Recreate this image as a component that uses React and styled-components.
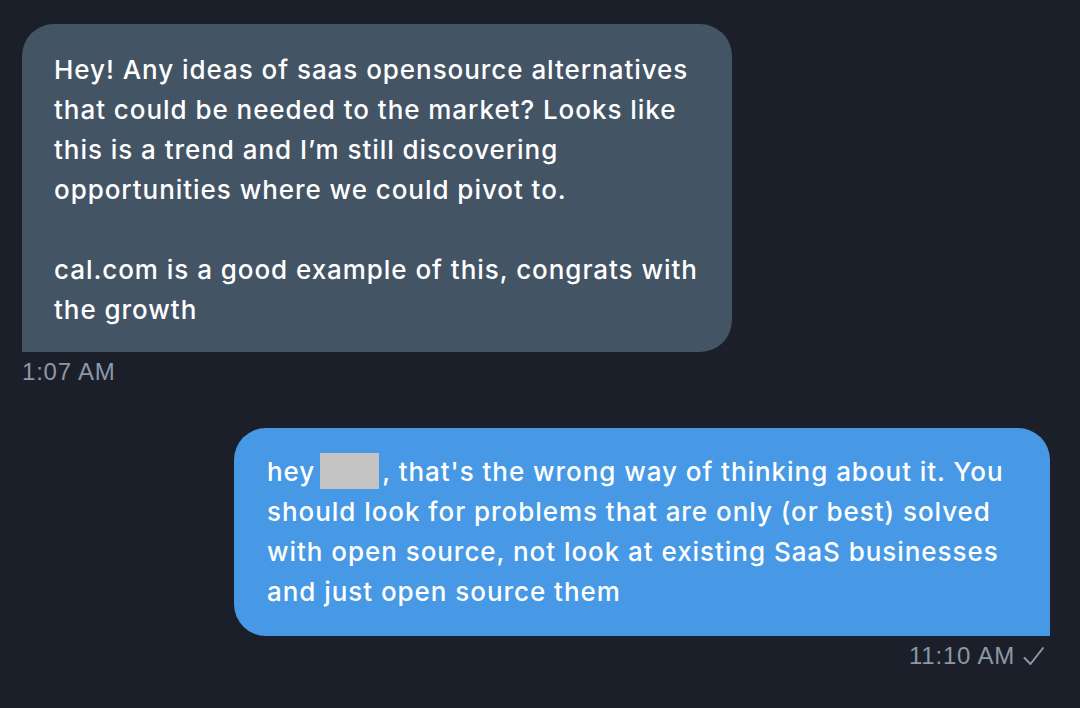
import React from "react";
import styled, { createGlobalStyle } from "styled-components";

const GlobalStyle = createGlobalStyle`
  html, body {
    margin: 0;
    padding: 0;
    background: #1b1f29;
  }
  body {
    font-family: Inter, "Noto Sans", "Liberation Sans", sans-serif;
    -webkit-font-smoothing: antialiased;
  }
`;

const Page = styled.div`
  width: 1080px;
  height: 708px;
  box-sizing: border-box;
  padding: 24px 30px 0 22px;
  display: flex;
  flex-direction: column;
  background: #1b1f29;
  overflow: hidden;
`;

const Message = styled.div`
  display: flex;
  flex-direction: column;
  align-items: ${(p) => (p.$mine ? "flex-end" : "flex-start")};
  margin-bottom: ${(p) => (p.$mine ? "0" : "42px")};
`;

const Bubble = styled.div`
  box-sizing: border-box;
  width: ${(p) => p.$width}px;
  padding: ${(p) => (p.$mine ? "24px 32px 24px 33px" : "26px 32px 22px 32px")};
  border-radius: ${(p) => (p.$mine ? "32px 32px 0 32px" : "32px 32px 32px 0")};
  background: ${(p) => (p.$mine ? "#4799e6" : "#435465")};
  color: #ffffff;
  font-size: 26px;
  font-weight: 500;
  line-height: 40px;
  letter-spacing: 0.95px;
`;

const Line = styled.div`
  white-space: nowrap;
  min-height: 40px;
`;

const Redacted = styled.span`
  display: inline-block;
  width: 59px;
  height: 36px;
  margin: 0 3px 0 5px;
  background: #c4c4c4;
  vertical-align: -8px;
`;

const Meta = styled.div`
  display: flex;
  align-items: center;
  gap: 8px;
  margin-top: 6px;
  padding-right: ${(p) => (p.$mine ? "5px" : "0")};
  color: #8b98a5;
  font-family: "Liberation Sans", Arial, sans-serif;
  font-size: 24px;
  line-height: 28px;
  letter-spacing: 0.8px;
`;

const Check = () => (
  <svg width="22" height="20" viewBox="0 0 22 20" fill="none">
    <path d="M1.5 12 L7.5 18 L20 2" stroke="#8b98a5" strokeWidth="2" strokeLinecap="round" strokeLinejoin="round" />
  </svg>
);

export default function App() {
  return (
    <>
      <GlobalStyle />
      <Page>
        <Message>
          <Bubble $width={710}>
            <Line>Hey! Any ideas of saas opensource alternatives</Line>
            <Line>that could be needed to the market? Looks like</Line>
            <Line>this is a trend and I’m still discovering</Line>
            <Line>opportunities where we could pivot to.</Line>
            <Line />
            <Line>cal.com is a good example of this, congrats with</Line>
            <Line>the growth</Line>
          </Bubble>
          <Meta>1:07 AM</Meta>
        </Message>
        <Message $mine>
          <Bubble $mine $width={816}>
            <Line>
              hey<Redacted />, that's the wrong way of thinking about it. You
            </Line>
            <Line>should look for problems that are only (or best) solved</Line>
            <Line>with open source, not look at existing SaaS businesses</Line>
            <Line>and just open source them</Line>
          </Bubble>
          <Meta $mine>
            11:10 AM <Check />
          </Meta>
        </Message>
      </Page>
    </>
  );
}
